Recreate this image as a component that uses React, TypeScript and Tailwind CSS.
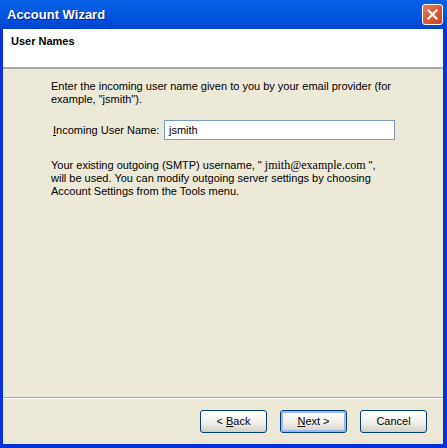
import React from "react";

function XpButton({ children, primary }: { children: React.ReactNode; primary?: boolean }) {
  return (
    <button
      className={`w-[67px] h-[23px] rounded-[3px] border border-[#003c74] bg-gradient-to-b from-[#ffffff] via-[#f4f3ee] to-[#d6d0c5] text-[11px] text-black ${primary ? "shadow-[inset_0_0_0_2px_#9cb7f0]" : ""}`}
    >
      {children}
    </button>
  );
}

export default function App() {
  return (
    <div className="w-[447px] h-[448px] flex flex-col bg-[#0831d9] font-['Liberation_Sans',Arial,sans-serif] overflow-hidden">
      <div className="h-[29px] flex items-center justify-between pl-[7px] pr-[4px] bg-gradient-to-b from-[#0a5fe6] via-[#0256e0] to-[#0043cc]">
        <span className="text-white font-bold text-[13px] [text-shadow:1px_1px_0_#0a1e8a]">Account Wizard</span>
        <div className="w-[21px] h-[21px] rounded-[3px] border border-white bg-gradient-to-br from-[#e67758] to-[#c9401c] flex items-center justify-center">
          <svg width="11" height="11" viewBox="0 0 11 11">
            <path d="M1.5 1.5 L9.5 9.5 M9.5 1.5 L1.5 9.5" stroke="white" strokeWidth="2.2" strokeLinecap="square" />
          </svg>
        </div>
      </div>
      <div className="flex-1 flex ml-[3px] mr-[4px] mb-[4px] flex-col bg-[#ece9d8]">
        <div className="h-[40px] bg-white border-b-2 border-b-[#a7a6aa] pl-[8px] pt-[4px]">
          <div className="text-[11px] font-bold text-black">User Names</div>
        </div>
        <div className="flex-1 flex flex-col pl-[48px] pr-[48px] pt-[11px] text-[11px] leading-[13px] text-black">
          <p className="pr-[4px]">Enter the incoming user name given to you by your email provider (for example, "jsmith").</p>
          <div className="flex items-center mt-[14px]">
            <span className="w-[113px] shrink-0 pl-[2px] whitespace-nowrap"><u>I</u>ncoming User Name:</span>
            <div className="w-[231px] shrink-0 h-[20px] border border-[#7f9db9] bg-white pl-[4px] flex items-center">jsmith</div>
          </div>
          <p className="mt-[19px] pr-[4px]">
            Your existing outgoing (SMTP) username, "{" "}
            <span className="font-['Liberation_Serif',serif] text-[12px] leading-[11px]">jmith@example.com</span>
            {" "}", will be used. You can modify outgoing server settings by choosing Account Settings from the Tools menu.
          </p>
        </div>
        <div className="border-t border-t-[#aca899] h-[47px] flex items-start justify-end gap-[13px] pr-[16px] pt-[12px] shadow-[inset_0_1px_0_#ffffff]">
          <XpButton>&lt; <u>B</u>ack</XpButton>
          <XpButton primary><u>N</u>ext &gt;</XpButton>
          <XpButton>Cancel</XpButton>
        </div>
      </div>
    </div>
  );
}
